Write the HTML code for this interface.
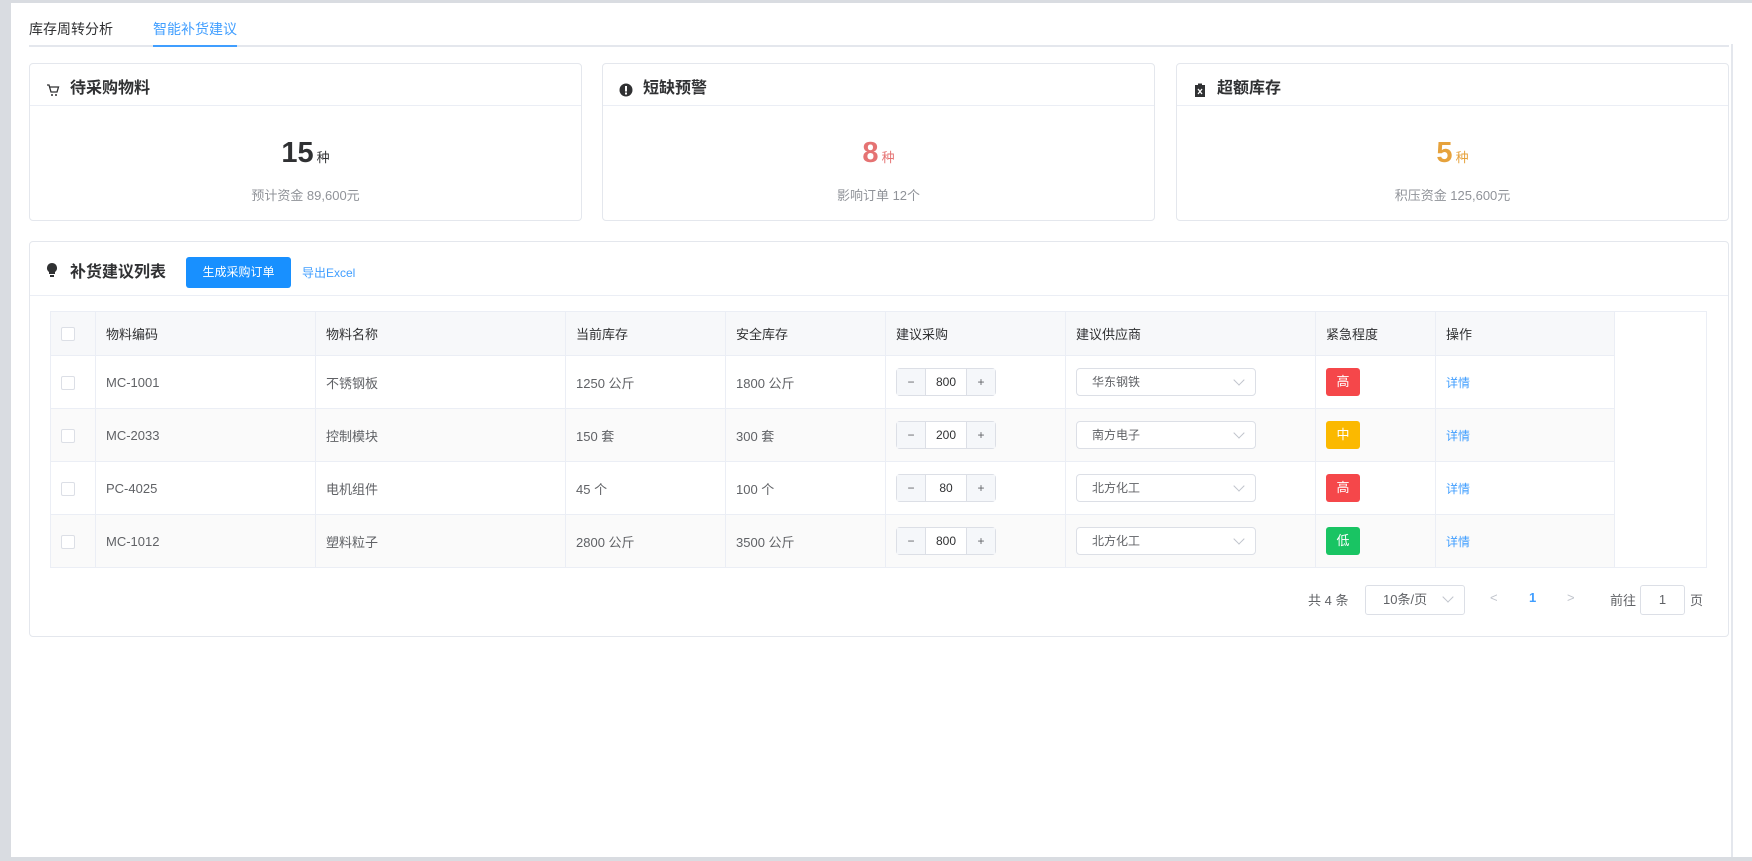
<!DOCTYPE html>
<html><head><meta charset="utf-8">
<style>
*{box-sizing:border-box;margin:0;padding:0}
body{width:1752px;height:861px;background:#fff;font-family:"Liberation Sans","Noto Sans CJK SC",sans-serif;color:#606266;position:relative;overflow:hidden;font-size:14px}
.a{position:absolute}
.card{position:absolute;border:1px solid #e4e7ed;border-radius:4px;background:#fff}
.ct{position:absolute;left:0;right:0;top:0;height:42px;border-bottom:1px solid #ebeef5;font-size:16px;font-weight:bold;color:#303133;line-height:50px;padding-left:40px}
.ico{position:absolute;left:16px;top:19px}
.num{position:absolute;left:0;right:0;top:73px;text-align:center;font-size:29px;font-weight:bold}
.num small{font-size:13px;font-weight:normal;margin-left:3px}
.sub{position:absolute;left:0;right:0;top:121px;text-align:center;font-size:13px;color:#909399}
table{border-collapse:collapse;position:absolute;left:50px;top:311px;font-size:13px}
td,th{border:1px solid #ebeef5;text-align:left;padding-left:10px;font-weight:normal}
th{height:44px;background:#f7f8fa;color:#303133;font-size:13px}
td{height:53px}
tr.s td{background:#fafafa}
.cb{display:inline-block;width:14px;height:14px;border:1px solid #dcdfe6;border-radius:2px;background:#fff;vertical-align:middle}
.inn{display:flex;width:100px;height:28px;border:1px solid #dcdfe6;border-radius:4px;font-size:12px;color:#303133;background:#fff}
.inn span{width:28px;background:#f5f7fa;text-align:center;line-height:26px;color:#606266}
.inn b{flex:1;text-align:center;line-height:26px;font-weight:normal;border-left:1px solid #dcdfe6;border-right:1px solid #dcdfe6}
.sel{position:relative;width:180px;height:28px;border:1px solid #dcdfe6;border-radius:4px;font-size:12px;line-height:26px;padding-left:15px;color:#606266;background:#fff}
.sel:after,.ps:after{content:"";position:absolute;right:12px;top:7px;width:7px;height:7px;border-right:1px solid #c0c4cc;border-bottom:1px solid #c0c4cc;transform:rotate(45deg)}
.bd{display:inline-block;width:34px;height:28px;border-radius:3px;color:#fff;text-align:center;line-height:28px;font-size:13px}
.lk{color:#409eff;font-size:12px}
</style></head><body>
<div class="a" style="left:0;top:0;width:11px;height:861px;background:#d9dce1"></div>
<div class="a" style="left:0;top:0;width:1752px;height:3px;background:#d9dce1"></div>
<div class="a" style="left:0;top:857px;width:1752px;height:4px;background:#d9dce1"></div>
<div class="a" style="left:1731px;top:44px;width:2px;height:813px;background:#e4e7ed"></div>

<div class="a" style="left:29px;top:19px;font-size:14px;color:#303133">库存周转分析</div>
<div class="a" style="left:153px;top:19px;font-size:14px;color:#409eff">智能补货建议</div>
<div class="a" style="left:29px;top:45px;width:1700px;height:2px;background:#e4e7ed"></div>
<div class="a" style="left:153px;top:45px;width:84px;height:2px;background:#409eff"></div>

<div class="card" style="left:29px;top:63px;width:553px;height:158px">
 <div class="ct"><svg class="ico" width="14" height="14" viewBox="0 0 14 14"><path d="M1 2h2l2 7h6l1.5-5H4" fill="none" stroke="#303133" stroke-width="1.3"/><circle cx="6" cy="12" r="1" fill="#303133"/><circle cx="10" cy="12" r="1" fill="#303133"/></svg>待采购物料</div>
 <div class="num" style="color:#303133">15<small>种</small></div>
 <div class="sub">预计资金 89,600元</div>
</div>
<div class="card" style="left:602px;top:63px;width:553px;height:158px">
 <div class="ct"><svg class="ico" width="14" height="14" viewBox="0 0 14 14"><circle cx="7" cy="7" r="6.5" fill="#303133"/><rect x="6" y="3" width="2" height="5.5" fill="#fff"/><rect x="6" y="9.5" width="2" height="2" fill="#fff"/></svg>短缺预警</div>
 <div class="num" style="color:#e57373">8<small>种</small></div>
 <div class="sub">影响订单 12个</div>
</div>
<div class="card" style="left:1176px;top:63px;width:553px;height:158px">
 <div class="ct"><svg class="ico" width="14" height="15" viewBox="0 0 14 15"><rect x="2" y="2" width="10" height="12" fill="#303133"/><rect x="5" y="0.5" width="4" height="2.5" fill="#303133"/><path d="M5 6l4 5M9 6l-4 5" stroke="#fff" stroke-width="1.3"/></svg>超额库存</div>
 <div class="num" style="color:#e6a23c">5<small>种</small></div>
 <div class="sub">积压资金 125,600元</div>
</div>

<div class="card" style="left:29px;top:241px;width:1700px;height:396px">
 <div class="a" style="left:0;right:0;top:0;height:54px;border-bottom:1px solid #ebeef5"></div>
 <svg class="a" style="left:16px;top:20px" width="12" height="16" viewBox="0 0 12 16"><path d="M6 1a5 5 0 0 0-3 9v2h6v-2a5 5 0 0 0-3-9z" fill="#303133"/><rect x="4" y="13" width="4" height="2" fill="#303133"/></svg>
 <div class="a" style="left:40px;top:16px;font-size:16px;font-weight:bold;color:#303133">补货建议列表</div>
 <div class="a" style="left:156px;top:15px;width:105px;height:31px;background:#1890ff;border-radius:3px;color:#fff;font-size:12px;text-align:center;line-height:31px">生成采购订单</div>
 <div class="a lk" style="left:272px;top:22px">导出Excel</div>
</div>
<div class="a" style="left:50px;top:311px;width:1657px;height:257px;border:1px solid #ebeef5"></div>
<table>
<tr><th style="width:45px"><span class="cb"></span></th><th style="width:220px">物料编码</th><th style="width:250px">物料名称</th><th style="width:160px">当前库存</th><th style="width:160px">安全库存</th><th style="width:180px">建议采购</th><th style="width:250px">建议供应商</th><th style="width:120px">紧急程度</th><th style="width:179px">操作</th></tr>
<tr><td><span class="cb"></span></td><td>MC-1001</td><td>不锈钢板</td><td>1250 公斤</td><td>1800 公斤</td><td><div class="inn"><span>−</span><b>800</b><span>+</span></div></td><td><div class="sel">华东钢铁</div></td><td><span class="bd" style="background:#f5474a">高</span></td><td class="lk">详情</td></tr>
<tr class="s"><td><span class="cb"></span></td><td>MC-2033</td><td>控制模块</td><td>150 套</td><td>300 套</td><td><div class="inn"><span>−</span><b>200</b><span>+</span></div></td><td><div class="sel">南方电子</div></td><td><span class="bd" style="background:#fbb900">中</span></td><td class="lk">详情</td></tr>
<tr><td><span class="cb"></span></td><td>PC-4025</td><td>电机组件</td><td>45 个</td><td>100 个</td><td><div class="inn"><span>−</span><b>80</b><span>+</span></div></td><td><div class="sel">北方化工</div></td><td><span class="bd" style="background:#f5474a">高</span></td><td class="lk">详情</td></tr>
<tr class="s"><td><span class="cb"></span></td><td>MC-1012</td><td>塑料粒子</td><td>2800 公斤</td><td>3500 公斤</td><td><div class="inn"><span>−</span><b>800</b><span>+</span></div></td><td><div class="sel">北方化工</div></td><td><span class="bd" style="background:#19c463">低</span></td><td class="lk">详情</td></tr>
</table>

<div class="a" style="left:1308px;top:590px;font-size:13px">共 4 条</div>
<div class="a ps" style="left:1365px;top:585px;width:100px;height:30px;border:1px solid #dcdfe6;border-radius:3px;font-size:13px;line-height:28px;padding-left:17px">10条/页</div>
<div class="a" style="left:1490px;top:590px;color:#c0c4cc;font-size:13px">&lt;</div>
<div class="a" style="left:1529px;top:590px;color:#409eff;font-weight:bold;font-size:13px">1</div>
<div class="a" style="left:1567px;top:590px;color:#c0c4cc;font-size:13px">&gt;</div>
<div class="a" style="left:1610px;top:590px;font-size:13px">前往</div>
<div class="a" style="left:1640px;top:585px;width:45px;height:30px;border:1px solid #dcdfe6;border-radius:3px;text-align:center;line-height:28px;font-size:13px">1</div>
<div class="a" style="left:1690px;top:590px;font-size:13px">页</div>
</body></html>
